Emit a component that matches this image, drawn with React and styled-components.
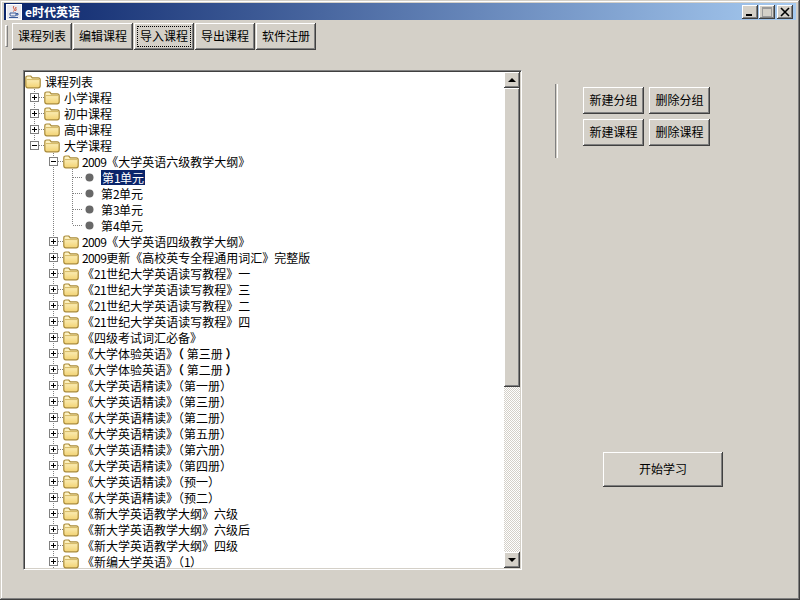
import { createGlobalStyle } from "styled-components";
import styled from "styled-components";

const GlobalStyle = createGlobalStyle`
  html, body {
    margin: 0;
    padding: 0;
    background: #d4d0c8;
  }
  * {
    box-sizing: border-box;
  }
`;

const Window = styled.div`
  width: 800px;
  height: 600px;
  overflow: hidden;
  padding: 3px 4px 4px;
  display: flex;
  flex-direction: column;
  background: #d4d0c8;
  font-family: "Noto Sans CJK SC", "Liberation Sans", sans-serif;
  font-size: 12px;
  color: #000;
  box-shadow: inset -1px -1px 0 #404040, inset 1px 1px 0 #d4d0c8,
    inset -2px -2px 0 #808080, inset 2px 2px 0 #fff;
`;

const TitleBar = styled.div`
  height: 17px;
  flex: none;
  display: flex;
  align-items: center;
  padding: 0 2px;
  gap: 3px;
  background: linear-gradient(to right, #0a246a, #a6caf0);
`;

const TitleText = styled.span`
  flex: 1;
  color: #fff;
  font-weight: bold;
  line-height: 15px;
  height: 16px;
`;

const CaptionButtons = styled.div`
  display: flex;
  align-items: center;
  margin-right: 1px;
`;

const CaptionButton = styled.div`
  width: 16px;
  height: 14px;
  margin-left: ${(p) => p.$gap || 0}px;
  display: flex;
  align-items: center;
  justify-content: center;
  background: #d4d0c8;
  box-shadow: inset -1px -1px 0 #404040, inset 1px 1px 0 #fff,
    inset -2px -2px 0 #808080;
`;

const Toolbar = styled.div`
  height: 30px;
  flex: none;
  display: flex;
  align-items: flex-start;
  padding-top: 3px;
  gap: 1px;
`;

const Grip = styled.div`
  width: 3px;
  height: 22px;
  margin: 2px 3px 0 1px;
  border-left: 1px solid #fff;
  border-top: 1px solid #fff;
  border-right: 1px solid #808080;
  border-bottom: 1px solid #808080;
`;

const Button = styled.button`
  flex: none;
  width: ${(p) => p.$w}px;
  height: ${(p) => p.$h}px;
  padding: 0 0 2px;
  display: flex;
  align-items: center;
  justify-content: center;
  border: none;
  background: #d4d0c8;
  font: inherit;
  color: #000;
  box-shadow: inset -1px -1px 0 #404040, inset 1px 1px 0 #fff,
    inset -2px -2px 0 #808080;
`;

const FocusLabel = styled.span`
  width: 52px;
  height: 19px;
  margin-top: 2px;
  padding-bottom: 2px;
  display: flex;
  align-items: center;
  justify-content: center;
  outline: 1px dotted #000;
`;

const Content = styled.div`
  flex: 1;
  display: flex;
  align-items: flex-start;
  padding: 20px 0 0 19px;
`;

const TreePane = styled.div`
  width: 499px;
  height: 500px;
  flex: none;
  display: flex;
  background: #fff;
  border: 1px solid;
  border-color: #808080 #fff #fff #808080;
  box-shadow: inset 1px 1px 0 #404040, inset -1px -1px 0 #d4d0c8;
`;

const TreeList = styled.div`
  flex: 1;
  min-width: 0;
  overflow: hidden;
  padding: 2px 0 0 1px;
`;

const Row = styled.div`
  height: 16px;
  display: flex;
  align-items: center;
  white-space: nowrap;
  line-height: 16px;
`;

const Label = styled.span`
  margin-left: ${(p) => p.$gap}px;
  padding: ${(p) => (p.$selected ? "0 1px" : "0")};
  height: 15px;
  line-height: 15px;
  background: ${(p) => (p.$selected ? "#0a246a" : "transparent")};
  color: ${(p) => (p.$selected ? "#fff" : "#000")};
`;

// digits are narrower in the original bitmap font
const Digits = styled.span`
  letter-spacing: -0.6px;
`;

const HeavyParen = styled.span`
  font-weight: bold;
`;

const Scrollbar = styled.div`
  width: 16px;
  flex: none;
  margin: 1px 1px 1px 0;
  display: flex;
  flex-direction: column;
  background: repeating-conic-gradient(#fff 0 25%, #d4d0c8 0 50%) 0 0 / 2px 2px;
`;

const ScrollButton = styled.div`
  height: 16px;
  flex: none;
  display: flex;
  align-items: center;
  justify-content: center;
  background: #d4d0c8;
  box-shadow: inset -1px -1px 0 #404040, inset 1px 1px 0 #fff,
    inset -2px -2px 0 #808080;
`;

const ScrollThumb = styled(ScrollButton)`
  height: 299px;
`;

const ScrollTrack = styled.div`
  flex: 1;
`;

const SidePanel = styled.div`
  display: flex;
  flex-direction: column;
  padding: 14px 0 0 33px;
`;

const EditGroup = styled.div`
  display: flex;
  gap: 25px;
`;

const Etched = styled.div`
  width: 3px;
  height: 74px;
  border-left: 1px solid #808080;
  border-right: 1px solid #fff;
  background: #d4d0c8;
`;

const EditGrid = styled.div`
  display: grid;
  grid-template-columns: 61px 61px;
  grid-auto-rows: 27px;
  gap: 5px;
  padding-top: 3px;
`;

const StartWrap = styled.div`
  padding: 294px 0 0 48px;
`;

const rows = [
  { level: 0, kind: "open", text: "课程列表" },
  { level: 1, kind: "plus", text: "小学课程" },
  { level: 1, kind: "plus", text: "初中课程" },
  { level: 1, kind: "plus", text: "高中课程" },
  { level: 1, kind: "minus", text: "大学课程", last: true },
  { level: 2, kind: "minus", text: "2009《大学英语六级教学大纲》" },
  { level: 3, kind: "leaf", text: "第1单元", selected: true },
  { level: 3, kind: "leaf", text: "第2单元" },
  { level: 3, kind: "leaf", text: "第3单元" },
  { level: 3, kind: "leaf", text: "第4单元", last: true },
  { level: 2, kind: "plus", text: "2009《大学英语四级教学大纲》" },
  { level: 2, kind: "plus", text: "2009更新《高校英专全程通用词汇》完整版" },
  { level: 2, kind: "plus", text: "《21世纪大学英语读写教程》一" },
  { level: 2, kind: "plus", text: "《21世纪大学英语读写教程》三" },
  { level: 2, kind: "plus", text: "《21世纪大学英语读写教程》二" },
  { level: 2, kind: "plus", text: "《21世纪大学英语读写教程》四" },
  { level: 2, kind: "plus", text: "《四级考试词汇必备》" },
  { level: 2, kind: "plus", text: "《大学体验英语》（ 第三册 ）" },
  { level: 2, kind: "plus", text: "《大学体验英语》（ 第二册 ）" },
  { level: 2, kind: "plus", text: "《大学英语精读》（第一册）" },
  { level: 2, kind: "plus", text: "《大学英语精读》（第三册）" },
  { level: 2, kind: "plus", text: "《大学英语精读》（第二册）" },
  { level: 2, kind: "plus", text: "《大学英语精读》（第五册）" },
  { level: 2, kind: "plus", text: "《大学英语精读》（第六册）" },
  { level: 2, kind: "plus", text: "《大学英语精读》（第四册）" },
  { level: 2, kind: "plus", text: "《大学英语精读》（预一）" },
  { level: 2, kind: "plus", text: "《大学英语精读》（预二）" },
  { level: 2, kind: "plus", text: "《新大学英语教学大纲》六级" },
  { level: 2, kind: "plus", text: "《新大学英语教学大纲》六级后" },
  { level: 2, kind: "plus", text: "《新大学英语教学大纲》四级" },
  { level: 2, kind: "plus", text: "《新编大学英语》（1）" },
];

const dotted = { stroke: "#808080", strokeDasharray: "1 1", strokeWidth: 1 };

const styleLabel = (text) =>
  text.split(/(\d+|（ | ）)/).map((part, i) => {
    if (/^\d+$/.test(part)) return <Digits key={i}>{part}</Digits>;
    if (part === "（ " || part === " ）") return <HeavyParen key={i}>{part}</HeavyParen>;
    return part;
  });

// one 19px gutter column of the tree: a guide line, maybe a branch and a box
const Gutter = ({ line, branch, last, box }) => (
  <svg width="19" height="16" style={{ flex: "none" }}>
    {line && <line x1="9.5" y1={0} x2="9.5" y2={last ? 8 : 16} {...dotted} />}
    {branch && <line x1="10" y1="8.5" x2="19" y2="8.5" {...dotted} />}
    {box && (
      <g>
        <rect x="5.5" y="4.5" width="8" height="8" fill="#fff" stroke="#808080" />
        <line x1="7" y1="8.5" x2="12" y2="8.5" stroke="#000" />
        {box === "plus" && <line x1="9.5" y1="6" x2="9.5" y2="11" stroke="#000" />}
      </g>
    )}
  </svg>
);

const Folder = () => (
  <svg width="16" height="16" viewBox="0 0 16 16" style={{ flex: "none" }}>
    <defs>
      <linearGradient id="folderFill" x1="0" y1="0" x2="0" y2="1">
        <stop offset="0" stopColor="#fff8d0" />
        <stop offset="1" stopColor="#f2d272" />
      </linearGradient>
    </defs>
    <path
      d="M0.8 5 Q0.8 3 2.8 3 H5.8 L7.3 4.8 H13.2 Q15.2 4.8 15.2 6.8 V12.8 Q15.2 14.8 13.2 14.8 H2.8 Q0.8 14.8 0.8 12.8 Z"
      fill="url(#folderFill)"
      stroke="#a98a38"
      strokeWidth="1.2"
    />
    <path d="M2 6.6 H14" stroke="#c9a94e" strokeWidth="0.8" />
  </svg>
);

const Bullet = () => (
  <svg width="15" height="16" style={{ flex: "none" }}>
    <circle cx="7.5" cy="8.5" r="4" fill="#686868" />
  </svg>
);

const JavaIcon = () => (
  <svg width="16" height="16" viewBox="0 0 16 16" style={{ flex: "none" }}>
    <rect x="0.5" y="0.5" width="15" height="15" fill="#e8e8f0" stroke="#fff" />
    <path d="M8 2 C6 4 10 5 7.5 7.5 M10 3 C9 5 11 5 9.5 7" fill="none" stroke="#d04020" />
    <path d="M4 9 H10 V11 Q10 12 8.5 12 H5.5 Q4 12 4 11 Z" fill="none" stroke="#3a5a9a" />
    <path d="M10 9.5 H12 V11 H10 M3 13.5 H12" fill="none" stroke="#3a5a9a" />
  </svg>
);

const MinimizeGlyph = () => (
  <svg width="10" height="10">
    <rect x="1" y="7" width="6" height="2" fill="#000" />
  </svg>
);

const MaximizeGlyph = () => (
  <svg width="10" height="10">
    <rect x="0.5" y="0.5" width="9" height="9" fill="none" stroke="#9a9a9a" />
    <rect x="0" y="0" width="10" height="2" fill="#9a9a9a" />
  </svg>
);

const CloseGlyph = () => (
  <svg width="10" height="10">
    <path d="M1 1 L9 9 M9 1 L1 9" stroke="#000" strokeWidth="1.6" />
  </svg>
);

const ArrowGlyph = ({ down }) => (
  <svg width="8" height="5">
    <path d={down ? "M0 0 H8 L4 4 Z" : "M4 0 L8 4 H0 Z"} fill="#000" />
  </svg>
);

const TreeRow = ({ level, kind, text, last, selected }) => {
  if (level === 0) {
    return (
      <Row>
        <Folder />
        <Label $gap={4}>{text}</Label>
      </Row>
    );
  }
  if (level === 1) {
    return (
      <Row>
        <Gutter line branch last={last} box={kind} />
        <Folder />
        <Label $gap={4}>{text}</Label>
      </Row>
    );
  }
  if (level === 2) {
    return (
      <Row>
        <Gutter />
        <Gutter line branch box={kind} />
        <Folder />
        <Label $gap={3}>{styleLabel(text)}</Label>
      </Row>
    );
  }
  return (
    <Row>
      <Gutter />
      <Gutter line />
      <Gutter line branch last={last} />
      <Bullet />
      <Label $gap={4} $selected={selected}>{styleLabel(text)}</Label>
    </Row>
  );
};

const App = () => {
  return (
    <Window>
      <GlobalStyle />
      <TitleBar>
        <JavaIcon />
        <TitleText>e时代英语</TitleText>
        <CaptionButtons>
          <CaptionButton><MinimizeGlyph /></CaptionButton>
          <CaptionButton $gap={1}><MaximizeGlyph /></CaptionButton>
          <CaptionButton $gap={2}><CloseGlyph /></CaptionButton>
        </CaptionButtons>
      </TitleBar>
      <Toolbar>
        <Grip />
        <Button $w={60} $h={27}>课程列表</Button>
        <Button $w={60} $h={27}>编辑课程</Button>
        <Button $w={60} $h={27}><FocusLabel>导入课程</FocusLabel></Button>
        <Button $w={60} $h={27}>导出课程</Button>
        <Button $w={60} $h={27}>软件注册</Button>
      </Toolbar>
      <Content>
        <TreePane>
          <TreeList>
            {rows.map((row, i) => (
              <TreeRow key={i} {...row} />
            ))}
          </TreeList>
          <Scrollbar>
            <ScrollButton><ArrowGlyph /></ScrollButton>
            <ScrollThumb />
            <ScrollTrack />
            <ScrollButton><ArrowGlyph down /></ScrollButton>
          </Scrollbar>
        </TreePane>
        <SidePanel>
          <EditGroup>
            <Etched />
            <EditGrid>
              <Button $w={61} $h={27}>新建分组</Button>
              <Button $w={61} $h={27}>删除分组</Button>
              <Button $w={61} $h={27}>新建课程</Button>
              <Button $w={61} $h={27}>删除课程</Button>
            </EditGrid>
          </EditGroup>
          <StartWrap>
            <Button $w={120} $h={35}>开始学习</Button>
          </StartWrap>
        </SidePanel>
      </Content>
    </Window>
  );
};

export default App;
